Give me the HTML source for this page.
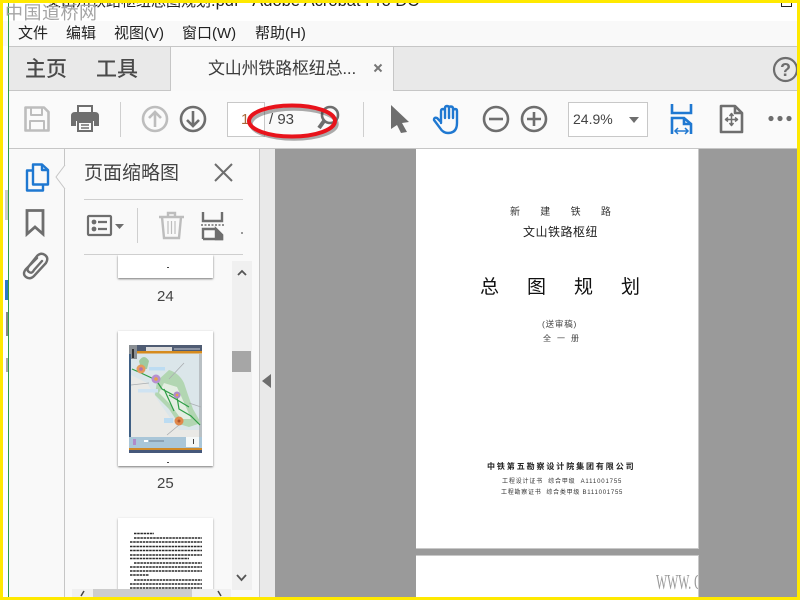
<!DOCTYPE html>
<html><head><meta charset="utf-8"><style>
html,body{margin:0;padding:0;width:800px;height:600px;overflow:hidden;background:#fff}
body{position:relative;font-family:"Liberation Sans","Noto Sans CJK SC",sans-serif;color:#333}
.a{position:absolute;white-space:nowrap;line-height:1}
.b{position:absolute}
svg{position:absolute;overflow:visible}
</style></head><body>
<div class="b" style="left:3px;top:21px;width:794px;height:25px;background:#f9f9f9"></div>
<div class="b" style="left:8px;top:46px;width:789px;height:1px;background:#c6c6c6"></div>
<div class="b" style="left:9px;top:47px;width:788px;height:43px;background:#e9e9e9"></div>
<div class="b" style="left:170px;top:47px;width:224px;height:44px;background:#f9f9f9;border-left:1px solid #c6c6c6;border-right:1px solid #c6c6c6;box-sizing:border-box"></div>
<div class="b" style="left:9px;top:90px;width:161px;height:1px;background:#c6c6c6"></div>
<div class="b" style="left:394px;top:90px;width:403px;height:1px;background:#c6c6c6"></div>
<div class="b" style="left:9px;top:91px;width:788px;height:57px;background:#fafafa"></div>
<div class="b" style="left:9px;top:148px;width:788px;height:1px;background:#c6c6c6"></div>
<div class="b" style="left:9px;top:149px;width:55px;height:451px;background:#f9f9f9"></div>
<div class="b" style="left:64px;top:149px;width:1px;height:451px;background:#c6c6c6"></div>
<div class="b" style="left:65px;top:149px;width:194px;height:451px;background:#f9f9f9"></div>
<div class="b" style="left:259px;top:149px;width:1px;height:451px;background:#c6c6c6"></div>
<div class="b" style="left:260px;top:149px;width:15px;height:451px;background:#e9e9e9"></div>
<div class="b" style="left:275px;top:149px;width:522px;height:451px;background:#9a9a9a"></div>

<!-- left sliver of background window -->
<div class="b" style="left:5px;top:190px;width:3px;height:30px;background:#ccc"></div>
<div class="b" style="left:5px;top:280px;width:3px;height:20px;background:#2a78c8"></div>
<div class="b" style="left:6px;top:312px;width:2px;height:24px;background:#888"></div>
<div class="b" style="left:6px;top:358px;width:2px;height:14px;background:#aaa"></div>
<div class="b" style="left:8px;top:0;width:1px;height:600px;background:#2d9a4b"></div>

<!-- title -->
<div class="a" style="left:46px;top:-7px;font-size:16.5px;color:#222"><span style="font-size:15px">文山州铁路枢纽总图规划</span>.pdf - Adobe Acrobat Pro DC</div>
<div class="b" style="left:781px;top:3px;width:11px;height:4px;border:1px solid #222;border-top:none;box-sizing:border-box"></div>
<div class="a" style="left:5px;top:4px;font-size:18px;letter-spacing:.5px;color:#a4a4a4;font-family:'Liberation Sans','Noto Sans CJK SC',sans-serif">中国道桥网</div>

<!-- menu -->
<div class="a" style="left:18px;top:26px;font-size:15px;color:#222">文件</div>
<div class="a" style="left:66px;top:26px;font-size:15px;color:#222">编辑</div>
<div class="a" style="left:114px;top:26px;font-size:15px;color:#222">视图(V)</div>
<div class="a" style="left:182px;top:26px;font-size:15px;color:#222">窗口(W)</div>
<div class="a" style="left:255px;top:26px;font-size:15px;color:#222">帮助(H)</div>

<!-- tabs -->
<div class="a" style="left:25px;top:59px;font-size:21px;font-weight:500;color:#4a4a4a">主页</div>
<div class="a" style="left:96px;top:59px;font-size:21px;font-weight:500;color:#4a4a4a">工具</div>
<div class="a" style="left:208px;top:60px;font-size:17px;letter-spacing:-.2px;color:#3c3c3c">文山州铁路枢纽总...</div>
<svg style="left:373px;top:63px" width="10" height="10"><path d="M1.5 1.5L8.5 8.5M8.5 1.5L1.5 8.5" stroke="#777" stroke-width="2"/></svg>
<svg style="left:773px;top:56px" width="26" height="27"><circle cx="12.5" cy="13.500" r="11.500" fill="none" stroke="#6e6e6e" stroke-width="2.200"/><text x="12.500" y="20" font-size="18" font-weight="700" text-anchor="middle" fill="#6e6e6e" font-family="Liberation Sans">?</text></svg>

<!-- toolbar -->
<svg style="left:24px;top:106px" width="26" height="26" fill="none" stroke="#bdbdbd" stroke-width="2.600" stroke-linejoin="round"><path d="M1.500 1.500H20L24.500 6V24.500H1.500Z"/><path d="M7 2V9H18V2" stroke-width="2"/><path d="M6 24V15H20V24" stroke-width="2"/></svg>
<svg style="left:71px;top:105px" width="28" height="27"><path d="M7 1H21V8H7Z" fill="#fafafa" stroke="#6e6e6e" stroke-width="2"/><path d="M4 7H24Q28 7 28 11V21H23V16H5V21H0V11Q0 7 4 7Z" fill="#6e6e6e"/><path d="M7 17H21V26H7Z" fill="#fafafa" stroke="#6e6e6e" stroke-width="2"/><path d="M10 20H18M10 23H18" stroke="#6e6e6e" stroke-width="1.500"/></svg>
<div class="b" style="left:120px;top:102px;width:1px;height:35px;background:#cfcfcf"></div>
<svg style="left:141px;top:105px" width="28" height="28" fill="none" stroke="#bdbdbd" stroke-width="2.600"><circle cx="14" cy="14" r="12"/><path d="M14 22V7M8 13L14 7L20 13"/></svg>
<svg style="left:179px;top:105px" width="28" height="28" fill="none" stroke="#6e6e6e" stroke-width="2.600"><circle cx="14" cy="14" r="12"/><path d="M14 6V21M8 15L14 21L20 15"/></svg>
<div class="b" style="left:227px;top:102px;width:38px;height:35px;background:#fff;border:1px solid #c8c8c8;box-sizing:border-box"></div>
<div class="a" style="left:241px;top:112px;font-size:15px;color:#a86a3a">1</div>
<div class="a" style="left:269px;top:112px;font-size:15px;color:#444">/ 93</div>
<svg style="left:317px;top:105px" width="26" height="28" fill="none" stroke="#6e6e6e" stroke-width="2.600"><circle cx="13" cy="10" r="8"/><path d="M7 16L2 23" stroke-width="4"/></svg>
<div class="b" style="left:363px;top:102px;width:1px;height:35px;background:#cfcfcf"></div>
<svg style="left:245px;top:101px" width="95" height="42"><ellipse cx="49" cy="23" rx="43" ry="15" fill="none" stroke="#333" stroke-width="3.500" opacity=".4"/><ellipse cx="47" cy="20" rx="43" ry="15.500" fill="none" stroke="#e8131b" stroke-width="4"/></svg>
<svg style="left:390px;top:105px" width="20" height="28"><path d="M1 0L19 17L12 18L17 27L11 28L7 20L1 24Z" fill="#6e6e6e"/></svg>
<svg style="left:433px;top:105px" width="28" height="29" fill="none" stroke="#1f78d1" stroke-width="2.400" stroke-linecap="round" stroke-linejoin="round"><path d="M8 18V6Q8 4 10 4T12 6V13M12 13V3Q12 1 14 1T16 3V13M16 13V3Q16 1.500 18 1.500T20 4V13M20 13V6Q20 4 22 4T24 6V18Q24 28 15 28Q10 28 7 23L1 15Q1 12 4 13L8 17"/></svg>
<svg style="left:482px;top:105px" width="28" height="28" fill="none" stroke="#6e6e6e" stroke-width="2.600"><circle cx="14" cy="14" r="12"/><path d="M7 14H21"/></svg>
<svg style="left:520px;top:105px" width="28" height="28" fill="none" stroke="#6e6e6e" stroke-width="2.600"><circle cx="14" cy="14" r="12"/><path d="M7 14H21M14 7V21"/></svg>
<div class="b" style="left:568px;top:102px;width:80px;height:35px;background:#fff;border:1px solid #c8c8c8;box-sizing:border-box"></div>
<div class="a" style="left:573px;top:112px;font-size:14px;color:#444">24.9%</div>
<svg style="left:629px;top:117px" width="10" height="6"><path d="M0 0H10L5 6Z" fill="#6e6e6e"/></svg>
<svg style="left:670px;top:104px" width="23" height="30" fill="none" stroke="#1f78d1" stroke-width="2.600"><path d="M2 0V9H21V0"/><path d="M2 30V14H14L21 20V30"/><path d="M14 14V20H21"/><path d="M5 27H18" stroke-width="1.500"/><path d="M8 24L5 27L8 30M15 24L18 27L15 30" stroke-width="1.500"/></svg>
<svg style="left:720px;top:105px" width="23" height="28" fill="none" stroke="#6e6e6e" stroke-width="2.600" stroke-linejoin="round"><path d="M1 1H15L22 8V27H1Z"/><path d="M15 1V8H22"/><path d="M11.500 9V20M6 14.500H17" stroke-width="1.500"/><path d="M9.500 11L11.500 8.500L13.500 11M9.500 18L11.500 20.500L13.500 18M8 12.500L5.500 14.500L8 16.500M15 12.500L17.500 14.500L15 16.500" stroke-width="1.500"/></svg>
<svg style="left:768px;top:115px" width="24" height="7" fill="#6e6e6e"><circle cx="3" cy="3.500" r="2.600"/><circle cx="12" cy="3.500" r="2.600"/><circle cx="21" cy="3.500" r="2.600"/></svg>

<!-- left rail -->
<svg style="left:25px;top:163px" width="24" height="29" fill="none" stroke="#1f78d1" stroke-width="2.400" stroke-linejoin="round"><path d="M8 1.500H17L23 7V21.500H8Z"/><path d="M17 1.500V7H23"/><path d="M8 7.500H2V27.500H18V21.500"/></svg>
<svg style="left:25px;top:209px" width="20" height="28" fill="none" stroke="#6e6e6e" stroke-width="2.800"><path d="M2 1.500H18V25L10 18L2 25Z"/></svg>
<svg style="left:22px;top:252px" width="26" height="28" fill="none" stroke="#6e6e6e" stroke-width="2.400" stroke-linecap="round"><path d="M15 6L4 17Q0 22 4 25T12 24L24 11Q27 6 23 3T15 4L7 14Q4 18 7 20T12 18L20 9"/></svg>
<svg style="left:55px;top:165px" width="10" height="24"><path d="M10 0L1 12L10 24" fill="#f9f9f9" stroke="#c6c6c6"/></svg>

<!-- panel header -->
<div class="a" style="left:84px;top:164px;font-size:19px;color:#444">页面缩略图</div>
<svg style="left:214px;top:163px" width="19" height="19"><path d="M1 1L18 18M18 1L1 18" stroke="#6e6e6e" stroke-width="2"/></svg>
<div class="b" style="left:84px;top:199px;width:159px;height:1px;background:#cfcfcf"></div>
<svg style="left:87px;top:215px" width="26" height="22" fill="none" stroke="#6e6e6e" stroke-width="2.200"><rect x="1" y="1" width="23" height="19" rx="1"/><circle cx="7" cy="7" r="2.400" fill="#6e6e6e" stroke="none"/><circle cx="7" cy="14" r="2.400" fill="#6e6e6e" stroke="none"/><path d="M11 7H20M11 14H20"/></svg>
<svg style="left:115px;top:224px" width="9" height="5"><path d="M0 0H9L4.500 5Z" fill="#6e6e6e"/></svg>
<div class="b" style="left:137px;top:208px;width:1px;height:35px;background:#cfcfcf"></div>
<svg style="left:159px;top:211px" width="26" height="29" fill="none" stroke="#bdbdbd" stroke-width="2.400"><path d="M0 6H25M9 6V2H16V6"/><path d="M3 6L5 27H20L22 6"/><path d="M9 10V23M12.500 10V23M16 10V23" stroke-width="1.200"/></svg>
<svg style="left:201px;top:212px" width="24" height="28" fill="none" stroke="#6e6e6e" stroke-width="2.400"><path d="M2 0V9H21V0"/><path d="M2 27V17H15L21 23V27H2"/><path d="M15 17L21 23V27H15Z" fill="#6e6e6e"/><path d="M0 13H23" stroke-dasharray="2 1.500" stroke-width="1.500"/></svg>
<div class="b" style="left:241px;top:232px;width:2px;height:2px;background:#999"></div>
<div class="b" style="left:84px;top:254px;width:159px;height:1px;background:#cfcfcf"></div>

<!-- thumbnails -->
<div class="b" style="left:65px;top:255px;width:167px;height:334px;overflow:hidden">
 <div class="b" style="left:53px;top:0;width:95px;height:23px;background:#fff;box-shadow:0 1px 2px #777"></div>
 <div class="b" style="left:102px;top:12px;width:2px;height:1px;background:#444"></div>
 <div class="a" style="left:92px;top:34px;font-size:15px;color:#444">24</div>
 <div class="b" style="left:53px;top:76px;width:95px;height:135px;background:#fff;box-shadow:0 1px 2px #777"></div>
 <div class="a" style="left:92px;top:221px;font-size:15px;color:#444">25</div>
 <div class="b" style="left:53px;top:263px;width:95px;height:90px;background:#fff;box-shadow:0 1px 2px #999"></div>
 <svg style="left:64px;top:90px" width="73" height="108">
  <rect width="73" height="108" fill="#dbe6ea"/>
  <path d="M2 30L18 38L32 60L50 85H70V95H2Z" fill="#e9e9e6"/>
  <rect width="73" height="7" fill="#4f5c73"/>
  <rect x="17" y="2" width="26" height="4" fill="#dcdcdc"/>
  <rect x="45" y="3" width="26" height="2" fill="#8b93a3"/>
  <rect x="8" y="6" width="65" height="2.500" fill="#d68b1d"/>
  <rect width="8" height="14" fill="#8a8f94"/>
  <rect x="3" y="4" width="2" height="9" fill="#333"/>
  <rect y="9" width="2" height="90" fill="#3f5f84"/>
  <rect x="70" y="9" width="3" height="85" fill="#b9c0c4"/>
  <path d="M40 25Q50 28 55 38L59 50L64 64L72 78L60 82L50 79L40 64L26 50L28 36Z" fill="#b2d6b2"/>
  <path d="M35 38L48 42L57 62L62 74L52 74L42 60L30 48Z" fill="#e4eee2"/>
  <path d="M10 16Q15 8 20 16L18 24L12 24Z" fill="#9fca9f"/>
  <path d="M55 18L40 34M72 62L60 58M38 90L50 80M2 40L20 38" stroke="#a9adb0" stroke-width=".8" fill="none"/>
  <path d="M3 24L12 28L27 35L33 44L48 52L50 64L62 71L71 80M35 44L45 66M40 50L60 62" fill="none" stroke="#2f9e46" stroke-width="1.200"/>
  <circle cx="12" cy="24" r="4.500" fill="#e59a5c"/><circle cx="12" cy="24" r="1.800" fill="#b070b0"/>
  <circle cx="27" cy="34" r="4.500" fill="#b78fd0"/><circle cx="27" cy="34" r="1.800" fill="#e7a24a"/>
  <circle cx="48" cy="50" r="3.500" fill="#b08ac8"/><circle cx="48" cy="50" r="1.300" fill="#e7a24a"/>
  <circle cx="50" cy="76" r="4.500" fill="#e0894c"/><circle cx="50" cy="76" r="1.500" fill="#b0552a"/>
  <rect x="20" y="22" width="16" height="3.500" fill="#bcdcf2"/>
  <rect x="9" y="44" width="20" height="3.500" fill="#cfe3f2"/>
  <rect x="35" y="73" width="9" height="5" fill="#bcdcf2"/>
  <rect y="92" width="73" height="11" fill="#a9c6d8"/>
  <rect x="57" y="92" width="13" height="10" fill="#f4f8f8"/>
  <rect x="64" y="94" width="1" height="5" fill="#444"/>
  <rect x="4" y="94" width="3" height="6" fill="#b08ac8"/><rect x="15" y="95" width="4" height="2" fill="#fff"/><rect x="20" y="95" width="15" height="2" fill="#8aa2b5"/>
  <rect y="103" width="73" height="2" fill="#d08a28"/>
  <rect y="105" width="73" height="3" fill="#46587a"/>
 </svg>
 <div class="b" style="left:102px;top:211px;width:2px;height:1px;background:#444;margin-top:-4px"></div>
 <svg style="left:64px;top:275px" width="74" height="60" fill="none" stroke="#2a2a2a" stroke-width="1.500" stroke-dasharray="2.500 .7">
  <path d="M5 3.500H25M5 8H73M1 12H73M1 16.500H73M1 20.500H73M1 25H73M1 28.500H60M5 33H73M1 37H73M1 41H73M1 45H20M5 50H73M1 54H73M1 58H73"/>
 </svg>
</div>
<!-- vertical scrollbar -->
<div class="b" style="left:232px;top:261px;width:20px;height:329px;background:#f0f0f0"></div>
<div class="b" style="left:232px;top:351px;width:19px;height:21px;background:#a6a6a6"></div>
<svg style="left:237px;top:269px" width="10" height="7"><path d="M1 6L5 2L9 6" fill="none" stroke="#555" stroke-width="1.800"/></svg>
<svg style="left:236px;top:574px" width="11" height="8"><path d="M1 1L5.500 6L10 1" fill="none" stroke="#555" stroke-width="1.800"/></svg>
<!-- horizontal scrollbar -->
<div class="b" style="left:72px;top:589px;width:159px;height:8px;background:#f0f0f0"></div>
<div class="b" style="left:93px;top:589px;width:99px;height:8px;background:#cdcdcd"></div>
<svg style="left:79px;top:591px" width="8" height="6"><path d="M5 0L2 5" stroke="#444" stroke-width="1.500"/></svg>
<svg style="left:216px;top:591px" width="8" height="6"><path d="M2 0L5 5" stroke="#444" stroke-width="1.500"/></svg>
<svg style="left:262px;top:374px" width="9" height="14"><path d="M9 0V14L0 7Z" fill="#6e6e6e"/></svg>

<!-- pdf pages -->
<div class="b" style="left:416px;top:149px;width:283px;height:400px;background:#fff;border-right:1px solid #c8c8c8;border-bottom:1px solid #c8c8c8;box-sizing:border-box"></div>
<div class="b" style="left:416px;top:555px;width:283px;height:45px;background:#fff;border-right:1px solid #c8c8c8;border-top:1px solid #c8c8c8;box-sizing:border-box"></div>

<div class="a" style="left:510px;top:208px;font-size:10px;letter-spacing:20.300px;color:#333">新建铁路</div>
<div class="a" style="left:523px;top:226px;font-size:12px;letter-spacing:.5px;color:#222">文山铁路枢纽</div>
<div class="a" style="left:480px;top:278px;font-size:19px;letter-spacing:28px;color:#111">总图规划</div>
<div class="a" style="left:542px;top:320px;font-size:8.500px;letter-spacing:.8px;color:#444">(送审稿)</div>
<div class="a" style="left:543px;top:335px;font-size:8px;letter-spacing:6px;color:#444">全一册</div>
<div class="a" style="left:487px;top:463px;font-size:8px;letter-spacing:1.900px;color:#222;font-weight:700">中铁第五勘察设计院集团有限公司</div>
<div class="a" style="left:502px;top:479px;font-size:6px;letter-spacing:.85px;color:#333">工程设计证书 &nbsp;综合甲级 &nbsp;A111001755</div>
<div class="a" style="left:501px;top:490px;font-size:6px;letter-spacing:.75px;color:#333">工程勘察证书 &nbsp;综合类甲级 B111001755</div>
<div class="b" style="left:656px;top:570px;width:42px;height:27px;overflow:hidden">
 <div class="a" style="left:0;top:2px;font-size:21px;color:#9a9a9a;font-family:'Liberation Serif',serif;transform-origin:left top;transform:scaleX(.56)">WWW. C</div>
</div>

<!-- yellow frame -->
<div class="b" style="left:0;top:0;width:800px;height:3px;background:#ffe900"></div>
<div class="b" style="left:0;top:597px;width:800px;height:3px;background:#ffe900"></div>
<div class="b" style="left:0;top:0;width:3px;height:600px;background:#ffe900"></div>
<div class="b" style="left:797px;top:0;width:3px;height:600px;background:#ffe900"></div>
</body></html>
